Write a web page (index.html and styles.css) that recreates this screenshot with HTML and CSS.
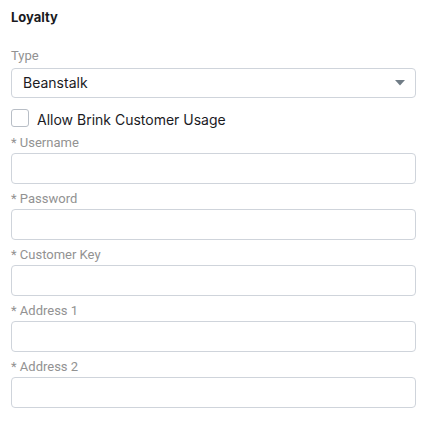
FILE: index.html
```html
<!DOCTYPE html>
<html>
<head>
<meta charset="utf-8">
<link rel="stylesheet" href="styles.css">
</head>
<body>
<div class="panel">
  <h2 class="title">Loyalty</h2>
  <div class="field field-type">
    <label class="label">Type</label>
    <div class="select">
      <span class="select-value">Beanstalk</span>
      <svg class="caret" width="10" height="6" viewBox="0 0 10 6"><path d="M0 0 H10 L5 5.5 Z" fill="#707c86"/></svg>
    </div>
  </div>
  <label class="check-row">
    <span class="checkbox"></span>
    <span class="check-label">Allow Brink Customer Usage</span>
  </label>
  <div class="fields">
    <div class="field">
      <label class="label">* Username</label>
      <div class="input"></div>
    </div>
    <div class="field">
      <label class="label">* Password</label>
      <div class="input"></div>
    </div>
    <div class="field">
      <label class="label">* Customer Key</label>
      <div class="input"></div>
    </div>
    <div class="field">
      <label class="label">* Address 1</label>
      <div class="input"></div>
    </div>
    <div class="field">
      <label class="label">* Address 2</label>
      <div class="input"></div>
    </div>
  </div>
</div>
</body>
</html>
```

FILE: styles.css
```css
html, body {
  margin: 0;
  padding: 0;
  background: #ffffff;
}
.panel {
  padding: 9px 14px 0 11px;
  font-family: Inter, "Noto Sans", sans-serif;
  color: #1b1b1f;
}
.title {
  margin: 0 0 23px 0;
  font-size: 13px;
  line-height: 16px;
  font-weight: 700;
  color: #1a1a1e;
}
.field {
  display: flex;
  flex-direction: column;
}
.label {
  font-family: Roboto, sans-serif;
  font-size: 13px;
  line-height: 15px;
  color: #929292;
  margin-bottom: 3px;
}
.field-type .label {
  margin-bottom: 5px;
}
.select {
  box-sizing: border-box;
  height: 30px;
  border: 1px solid #cfd4db;
  border-radius: 4px;
  display: flex;
  align-items: center;
  justify-content: space-between;
  padding: 0 10px 0 11px;
}
.select-value {
  font-size: 14px;
  line-height: 16px;
  color: #1b1b1f;
}
.caret {
  display: block;
}
.check-row {
  display: flex;
  align-items: center;
  gap: 8px;
  height: 18px;
  margin: 11px 0 8px 0;
}
.checkbox {
  box-sizing: border-box;
  width: 18px;
  height: 18px;
  border: 1.5px solid #b8bec6;
  border-radius: 3px;
  background: #fff;
}
.check-label {
  font-size: 14px;
  line-height: 16px;
  margin-top: 4px;
  color: #1b1b1f;
}
.fields {
  display: flex;
  flex-direction: column;
  gap: 7px;
}
.input {
  box-sizing: border-box;
  height: 31px;
  border: 1px solid #cfd4db;
  border-radius: 4px;
  background: #fff;
}
```
